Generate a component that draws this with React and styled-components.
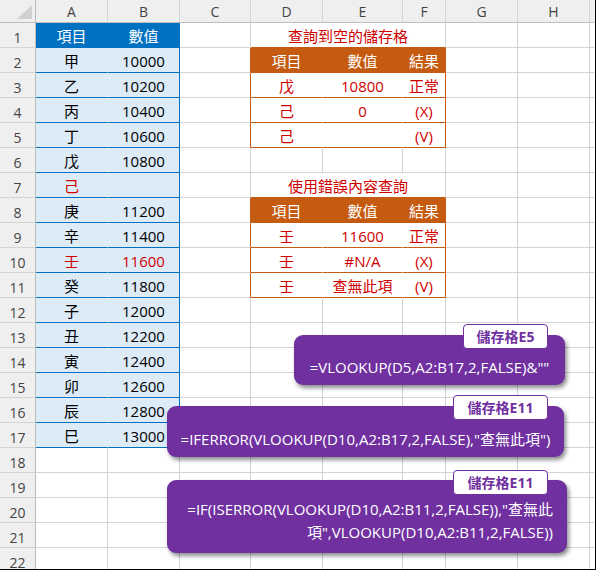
import React from 'react';
import styled, { createGlobalStyle } from 'styled-components';

const BLUE = '#0070c0';
const LIGHT = '#ddebf7';
const ORANGE = '#c55a11';
const RED = '#d00000';
const GRID = '#d4d4d4';
const HEAD_LINE = '#bdbdbd';
const PURPLE = '#7030a0';
const FONT = '"Open Sans", "Noto Sans CJK TC", sans-serif';

const GlobalStyle = createGlobalStyle`
  html, body { margin: 0; padding: 0; background: #fff; }
  body { font-family: ${FONT}; }
`;

const Frame = styled.div`
  position: relative;
  width: 596px;
  height: 570px;
  box-sizing: border-box;
  border-right: 1px solid #000;
  border-bottom: 1px solid #000;
  overflow: hidden;
  background: #fff;
`;

const Sheet = styled.div`
  display: grid;
  grid-template-columns: 36px 72px 72px 71px 72px 80px 43px 72px 72px 5px;
  grid-template-rows: 23px repeat(22, 25px);
`;

const Corner = styled.div`
  box-sizing: border-box;
  background: #efefef;
  border-right: 1px solid ${HEAD_LINE};
  border-bottom: 1px solid ${HEAD_LINE};
  display: flex;
  align-items: flex-end;
  justify-content: flex-end;
  padding: 0 3px 3px 0;
`;

const ColHead = styled.div`
  box-sizing: border-box;
  background: #efefef;
  border-right: 1px solid ${p => (p.$last ? '#efefef' : GRID)};
  border-bottom: 1px solid ${HEAD_LINE};
  color: #444;
  font-size: 14px;
  display: flex;
  align-items: center;
  justify-content: center;
`;

const RowHead = styled.div`
  box-sizing: border-box;
  background: #efefef;
  border-right: 1px solid ${HEAD_LINE};
  border-bottom: 1px solid ${GRID};
  color: #444;
  font-size: 14px;
  display: flex;
  align-items: center;
  justify-content: center;
  padding-top: 4px;
`;

const Cell = styled.div`
  box-sizing: border-box;
  grid-column: span ${p => p.$span || 1};
  background: ${p => p.$bg || '#fff'};
  color: ${p => p.$color || '#000'};
  border-right: 1px solid ${p => p.$br || GRID};
  border-bottom: 1px solid ${p => p.$bb || GRID};
  display: flex;
  align-items: center;
  justify-content: center;
  font-size: 15px;
  white-space: nowrap;
  padding-top: 1px;
`;

const Callout = styled.div`
  position: absolute;
  left: ${p => p.$x}px;
  top: ${p => p.$y}px;
  width: ${p => p.$w}px;
  height: ${p => p.$h}px;
  box-sizing: border-box;
  padding: ${p => p.$pad};
  background: ${PURPLE};
  border-radius: 9px;
  box-shadow: 2px 3px 4px rgba(0, 0, 0, 0.45);
  color: #fff;
  font-family: ${FONT};
  font-size: 15px;
  line-height: 23px;
  text-align: ${p => p.$align || 'center'};
  white-space: nowrap;
`;

const Tag = styled.div`
  position: absolute;
  top: ${p => p.$top}px;
  right: ${p => p.$right}px;
  width: ${p => p.$w}px;
  height: 25px;
  box-sizing: border-box;
  background: #fff;
  border: 1px solid ${PURPLE};
  border-radius: 4px;
  color: ${PURPLE};
  font-weight: 700;
  font-size: 14px;
  display: flex;
  align-items: center;
  justify-content: center;
`;

const COLS = ['A', 'B', 'C', 'D', 'E', 'F', 'G', 'H', ''];

const listAB = [
  ['項目', '數值'],
  ['甲', '10000'],
  ['乙', '10200'],
  ['丙', '10400'],
  ['丁', '10600'],
  ['戊', '10800'],
  ['己', '', true, false],
  ['庚', '11200'],
  ['辛', '11400'],
  ['壬', '11600', true, true],
  ['癸', '11800'],
  ['子', '12000'],
  ['丑', '12200'],
  ['寅', '12400'],
  ['卯', '12600'],
  ['辰', '12800'],
  ['巳', '13000'],
];

const tables = {
  1: { title: '查詢到空的儲存格' },
  2: { head: ['項目', '數值', '結果'] },
  3: { row: ['戊', '10800', '正常'] },
  4: { row: ['己', '0', '(X)'] },
  5: { row: ['己', '', '(V)'] },
  7: { title: '使用錯誤內容查詢' },
  8: { head: ['項目', '數值', '結果'] },
  9: { row: ['壬', '11600', '正常'] },
  10: { row: ['壬', '#N/A', '(X)'] },
  11: { row: ['壬', '查無此項', '(V)'] },
};

function rowCells(r) {
  const cells = [];
  // A, B
  const ab = listAB[r - 1];
  if (ab) {
    const head = r === 1;
    const bg = head ? BLUE : LIGHT;
    cells.push(
      <Cell key="A" $bg={bg} $br={bg} $bb={BLUE} $color={head ? '#fff' : ab[2] ? RED : '#000'}>
        {ab[0]}
      </Cell>,
      <Cell key="B" $bg={bg} $br={BLUE} $bb={BLUE} $color={head ? '#fff' : ab[3] ? RED : '#000'}>
        {ab[1]}
      </Cell>
    );
  } else {
    cells.push(<Cell key="A" />, <Cell key="B" />);
  }
  // C .. F
  const t = tables[r];
  const inTable = t && (t.head || t.row);
  cells.push(<Cell key="C" $br={inTable ? ORANGE : GRID} />);
  if (t && t.title) {
    cells.push(
      <Cell key="DEF" $span={3} $color={RED} $bb={ORANGE}>
        {t.title}
      </Cell>
    );
  } else if (t && t.head) {
    t.head.forEach((h, i) =>
      cells.push(
        <Cell key={'h' + i} $bg={ORANGE} $br={ORANGE} $bb={ORANGE} $color="#fff">
          {h}
        </Cell>
      )
    );
  } else if (t && t.row) {
    t.row.forEach((v, i) =>
      cells.push(
        <Cell key={'v' + i} $br={i === 2 ? ORANGE : '#fff'} $bb={ORANGE} $color={RED}>
          {v}
        </Cell>
      )
    );
  } else {
    cells.push(<Cell key="D" />, <Cell key="E" />, <Cell key="F" />);
  }
  cells.push(<Cell key="G" />, <Cell key="H" />, <Cell key="I" $br="#fff" />);
  return cells;
}

export default function App() {
  const rows = Array.from({ length: 22 }, (_, i) => i + 1);
  return (
    <>
      <GlobalStyle />
      <Frame>
        <Sheet>
          <Corner>
            <svg width="15" height="14" viewBox="0 0 15 14">
              <polygon points="15,0 15,14 0,14" fill="#d0d0d0" />
            </svg>
          </Corner>
          {COLS.map((c, i) => (
            <ColHead key={i} $last={i === COLS.length - 1}>
              {c}
            </ColHead>
          ))}
          {rows.map(r => (
            <React.Fragment key={r}>
              <RowHead>{r}</RowHead>
              {rowCells(r)}
            </React.Fragment>
          ))}
        </Sheet>

        <Callout $x={294} $y={335} $w={271} $h={50} $pad="21px 10px 0">
          <Tag $top={-11} $right={17} $w={85}>儲存格E5</Tag>
          =VLOOKUP(D5,A2:B17,2,FALSE)&amp;""
        </Callout>

        <Callout $x={167} $y={406} $w={397} $h={51} $pad="22px 10px 0">
          <Tag $top={-11} $right={16} $w={95}>儲存格E11</Tag>
          =IFERROR(VLOOKUP(D10,A2:B17,2,FALSE),"查無此項")
        </Callout>

        <Callout $x={167} $y={480} $w={400} $h={73} $pad="18px 14px 0" $align="right">
          <Tag $top={-10} $right={19} $w={95}>儲存格E11</Tag>
          =IF(ISERROR(VLOOKUP(D10,A2:B11,2,FALSE)),"查無此
          <br />
          項",VLOOKUP(D10,A2:B11,2,FALSE))
        </Callout>
      </Frame>
    </>
  );
}
